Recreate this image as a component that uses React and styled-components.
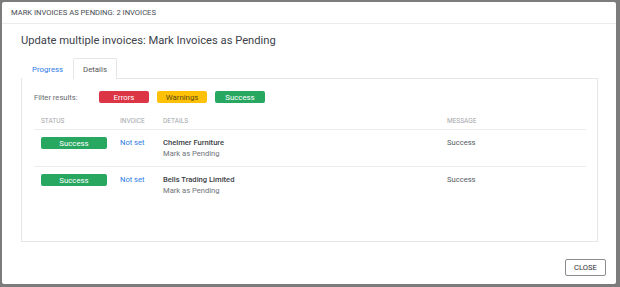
import React from 'react';
import styled, { createGlobalStyle } from 'styled-components';

const GlobalStyle = createGlobalStyle`
  html, body {
    margin: 0;
    padding: 0;
    background: #7c7c7c;
    font-family: Roboto, "Liberation Sans", Arial, sans-serif;
  }
`;

const Backdrop = styled.div`
  width: 620px;
  height: 287px;
  padding: 2px 4px 3px 2px;
  box-sizing: border-box;
  background: #7c7c7c;
`;

const Modal = styled.div`
  width: 614px;
  height: 282px;
  background: #fff;
  border-radius: 2px;
  display: flex;
  flex-direction: column;
`;

const ModalHeader = styled.div`
  height: 21px;
  border-bottom: 1px solid #ececec;
  padding: 0 9px;
  display: flex;
  align-items: center;
  font-size: 7.6px;
  color: #474b52;
  text-transform: uppercase;
`;

const ModalBody = styled.div`
  flex: 1;
  padding: 8px 18px 0 19px;
  display: flex;
  flex-direction: column;
`;

const Title = styled.h2`
  margin: 0;
  font-size: 11.2px;
  line-height: 18px;
  font-weight: 400;
  color: #3d424b;
`;

const Tabs = styled.div`
  display: flex;
  margin-top: 8px;
  padding-left: 1px;
`;

const Tab = styled.div`
  height: 21px;
  box-sizing: border-box;
  padding: 0 9px;
  display: flex;
  align-items: center;
  font-size: 7.8px;
  color: ${p => (p.$active ? '#555' : '#2d7be5')};
  border: 1px solid ${p => (p.$active ? '#e6e6e6' : 'transparent')};
  border-bottom: none;
  border-radius: 2px 2px 0 0;
  background: #fff;
  margin-bottom: -1px;
  position: relative;
`;

const Panel = styled.div`
  height: 164px;
  box-sizing: border-box;
  border: 1px solid #e6e6e6;
  padding: 12px 11px 0 12px;
`;

const FilterRow = styled.div`
  display: flex;
  align-items: center;
  gap: 8px;
`;

const FilterLabel = styled.span`
  font-size: 7.6px;
  color: #666a70;
  width: 57px;
`;

const colors = {
  error: ['#dc3545', '#fff'],
  warning: ['#ffc107', '#5a4a10'],
  success: ['#28a761', '#fff'],
};

const Badge = styled.span`
  width: ${p => p.$w || 50}px;
  height: 12px;
  border-radius: 2px;
  display: inline-flex;
  align-items: center;
  justify-content: center;
  font-size: 7.8px;
  background: ${p => colors[p.$kind][0]};
  color: ${p => colors[p.$kind][1]};
`;

const Table = styled.div`
  margin-top: 9px;
`;

const Row = styled.div`
  display: grid;
  grid-template-columns: 79px 43px 284px 1fr;
  border-bottom: 1px solid #ececec;
  padding: ${p => (p.$head ? '5px 0 4px' : '7px 0 0')};
  height: ${p => (p.$head ? 'auto' : '29px')};
  align-items: start;

  &:last-child {
    border-bottom: none;
  }
`;

const HeadCell = styled.div`
  font-size: 6.5px;
  color: #a3a6ab;
  text-transform: uppercase;
  padding-left: 7px;
  line-height: 8px;
`;

const Cell = styled.div`
  padding-left: 7px;
  font-size: 7.6px;
  line-height: 11px;
  color: #555a61;
`;

const Link = styled.a`
  color: #2d7be5;
  text-decoration: none;
`;

const Company = styled.div`
  font-weight: 500;
  color: #3a3e45;
`;

const Sub = styled.div`
  color: #6f737a;
`;

const Footer = styled.div`
  display: flex;
  justify-content: flex-end;
  padding: 0 10px 8px 0;
`;

const CloseButton = styled.button`
  width: 41px;
  height: 17px;
  background: #fff;
  border: 1px solid #8c8c8c;
  border-radius: 2px;
  font-family: inherit;
  font-size: 7.6px;
  color: #333;
  padding: 0;
`;

const rows = [
  { company: 'Chelmer Furniture' },
  { company: 'Bells Trading Limited' },
];

export default function App() {
  return (
    <>
      <GlobalStyle />
      <Backdrop>
        <Modal>
          <ModalHeader>Mark invoices as pending: 2 invoices</ModalHeader>
          <ModalBody>
            <Title>Update multiple invoices: Mark Invoices as Pending</Title>
            <Tabs>
              <Tab>Progress</Tab>
              <Tab $active>Details</Tab>
            </Tabs>
            <Panel>
              <FilterRow>
                <FilterLabel>Filter results:</FilterLabel>
                <Badge $kind="error">Errors</Badge>
                <Badge $kind="warning">Warnings</Badge>
                <Badge $kind="success">Success</Badge>
              </FilterRow>
              <Table>
                <Row $head>
                  <HeadCell>Status</HeadCell>
                  <HeadCell>Invoice</HeadCell>
                  <HeadCell>Details</HeadCell>
                  <HeadCell>Message</HeadCell>
                </Row>
                {rows.map(r => (
                  <Row key={r.company}>
                    <Cell><Badge $kind="success" $w={66}>Success</Badge></Cell>
                    <Cell><Link href="#">Not set</Link></Cell>
                    <Cell>
                      <Company>{r.company}</Company>
                      <Sub>Mark as Pending</Sub>
                    </Cell>
                    <Cell>Success</Cell>
                  </Row>
                ))}
              </Table>
            </Panel>
          </ModalBody>
          <Footer>
            <CloseButton>CLOSE</CloseButton>
          </Footer>
        </Modal>
      </Backdrop>
    </>
  );
}
